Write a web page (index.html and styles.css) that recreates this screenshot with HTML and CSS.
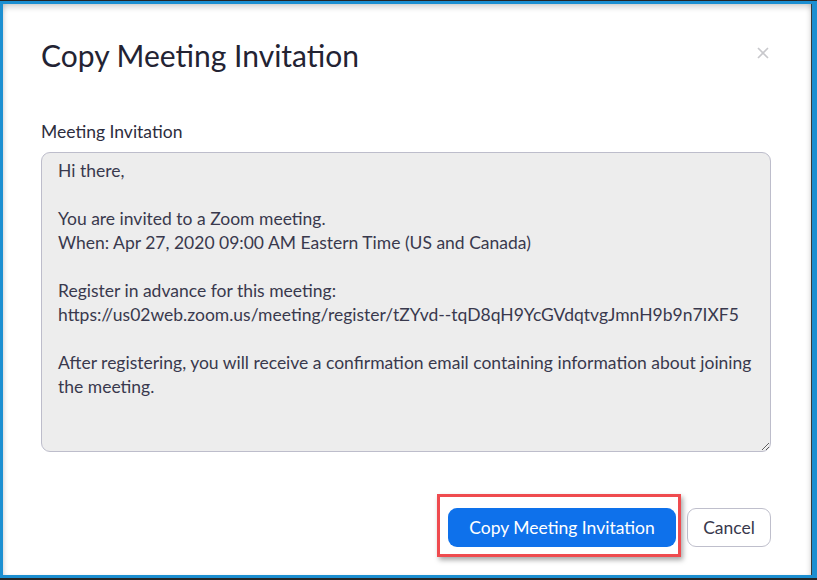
FILE: index.html
```html
<!DOCTYPE html>
<html lang="en">
<head>
    <meta charset="UTF-8">
    <title>Copy Meeting Invitation</title>
    <link rel="stylesheet" href="styles.css">
</head>
<body>
    <div class="screen">
        <div class="window">
            <div class="dialog">
                <div class="dialog-header">
                    <h1>Copy Meeting Invitation</h1>
                    <button class="close" aria-label="Close">
                        <svg width="12" height="12" viewBox="0 0 12 12">
                            <path d="M1 1 L11 11 M11 1 L1 11" stroke="#c8c8cc" stroke-width="1.6" fill="none"/>
                        </svg>
                    </button>
                </div>

                <label class="field-label" for="invite">Meeting Invitation</label>
                <textarea id="invite" class="invite" readonly>Hi there,

You are invited to a Zoom meeting.
When: Apr 27, 2020 09:00 AM Eastern Time (US and Canada)

Register in advance for this meeting:
https://us02web.zoom.us/meeting/register/tZYvd--tqD8qH9YcGVdqtvgJmnH9b9n7IXF5

After registering, you will receive a confirmation email containing information about joining the meeting.</textarea>

                <div class="dialog-footer">
                    <div class="highlight-wrap">
                        <button class="btn btn-primary">Copy Meeting Invitation</button>
                        <!-- callout box drawn over the screenshot -->
                        <div class="highlight"></div>
                    </div>
                    <button class="btn btn-default">Cancel</button>
                </div>
            </div>
        </div>
    </div>
</body>
</html>
```

FILE: styles.css
```css
body {
    margin: 0;
    padding: 0;
    font-family: Lato, "Open Sans", sans-serif;
    background: #262626;
}

.screen {
    width: 817px;
    height: 580px;
    box-sizing: border-box;
    padding: 1px 0 2px 0;
    background: #262626;
}

.window {
    height: 100%;
    box-sizing: border-box;
    background: #fff;
    border-style: solid;
    border-color: #1c8fd1;
    border-width: 3px 5px 3px 3px;
    box-shadow: inset -1px 0 0 #3a3a3a,
                inset 0 6px 6px -3px rgba(0, 0, 0, 0.18),
                inset 4px 0 5px -3px rgba(0, 0, 0, 0.15),
                inset -5px 0 5px -3px rgba(0, 0, 0, 0.15);
}

.dialog {
    width: 730px;
    margin-left: 38px;
    padding-top: 34px;
}

.dialog-header {
    display: flex;
    justify-content: space-between;
    align-items: flex-start;
}

h1 {
    margin: 0;
    font-size: 30px;
    line-height: 34px;
    font-weight: 400;
    color: #232333;
}

.close {
    margin: 7px 0 0 0;
    padding: 0;
    border: none;
    background: none;
    width: 16px;
    height: 16px;
    display: flex;
    align-items: center;
    justify-content: center;
}

.field-label {
    display: block;
    margin-top: 50px;
    font-size: 17.5px;
    line-height: 20px;
    color: #2d2d3d;
}

.invite {
    display: block;
    margin-top: 10px;
    width: 730px;
    height: 300px;
    box-sizing: border-box;
    padding: 6px 16px;
    border: 1px solid #bdbdcb;
    border-radius: 9px;
    background: #ededed;
    font-family: Lato, "Open Sans", sans-serif;
    font-size: 17.5px;
    line-height: 24px;
    color: #39394d;
    resize: both;
    overflow: hidden;
    outline: none;
}

.dialog-footer {
    display: flex;
    justify-content: flex-end;
    align-items: center;
    gap: 11px;
    margin-top: 56px;
}

.highlight-wrap {
    position: relative;
}

.btn {
    height: 39px;
    box-sizing: border-box;
    font-family: Lato, "Open Sans", sans-serif;
    font-size: 17.5px;
    border-radius: 9px;
    cursor: pointer;
}

.btn-primary {
    width: 228px;
    padding: 0;
    border: none;
    background: #0e71eb;
    color: #fff;
}

.btn-default {
    width: 84px;
    padding: 0;
    border: 1px solid #bfbfcc;
    background: #fff;
    color: #39394d;
}

.highlight {
    position: absolute;
    left: -11px;
    top: -14px;
    right: -5px;
    bottom: -10px;
    border: 3px solid #ef4b4f;
    box-shadow: 2px 3px 5px rgba(0, 0, 0, 0.35);
    pointer-events: none;
}
```
